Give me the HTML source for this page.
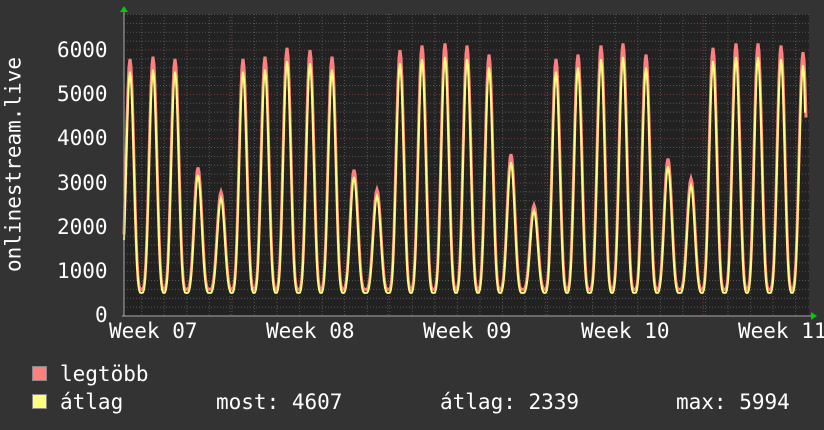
<!DOCTYPE html>
<html><head><meta charset="utf-8"><style>
html,body{margin:0;padding:0;background:#333;}
body{width:824px;height:430px;overflow:hidden;position:relative;font-family:"DejaVu Sans Mono","Liberation Mono",monospace;color:#fff;}
.t{position:absolute;font-size:21px;line-height:1;white-space:pre;}
.sq{position:absolute;width:13px;height:13px;border:1px solid #888;}
</style></head><body>
<svg id="g" width="824" height="430" style="position:absolute;left:0;top:0"></svg>
<div class="t" style="left:57px;top:40px">6000</div>
<div class="t" style="left:57px;top:84px">5000</div>
<div class="t" style="left:57px;top:128px">4000</div>
<div class="t" style="left:57px;top:173px">3000</div>
<div class="t" style="left:57px;top:217px">2000</div>
<div class="t" style="left:57px;top:261px">1000</div>
<div class="t" style="left:95px;top:305px">0</div>
<div class="t" style="left:-96px;top:154px;transform:rotate(-90deg);width:220px;text-align:center">onlinestream.live</div>
<div class="t" style="left:109px;top:321px">Week 07</div>
<div class="t" style="left:266px;top:321px">Week 08</div>
<div class="t" style="left:423px;top:321px">Week 09</div>
<div class="t" style="left:581px;top:321px">Week 10</div>
<div class="t" style="left:738px;top:321px">Week 11</div>
<div class="sq" style="left:32px;top:366px;background:#ff7f7f"></div>
<div class="sq" style="left:32px;top:394px;background:#ffff7f"></div>
<div class="t" style="left:60px;top:364px">legtöbb</div>
<div class="t" style="left:60px;top:392px">átlag</div>
<div class="t" style="left:216px;top:392px">most: 4607</div>
<div class="t" style="left:440px;top:392px">átlag: 2339</div>
<div class="t" style="left:676px;top:392px">max: 5994</div>
<script>
var s='<rect x="124" y="14" width="685" height="302" fill="#222"/>';
function Y(v){return 316-v*0.04433;}
for(var v=200;v<6900;v+=200){var y=Y(v);if(y<14)break;var maj=v%1000==0;
s+='<line x1="124" x2="809" y1="'+y+'" y2="'+y+'" stroke="'+(maj?'#7a3a3a':'#555')+'" stroke-dasharray="1,2"/>';}
for(var x=141.7;x<809;x+=22.55){s+='<line y1="14" y2="316" x1="'+x+'" x2="'+x+'" stroke="#555" stroke-dasharray="1,2"/>';}
[229.9,387.6,545.3,703].forEach(function(x){s+='<line y1="14" y2="316" x1="'+x+'" x2="'+x+'" stroke="#7a3a3a" stroke-dasharray="1,2"/>';});
var pk=[[130,5800],[153,5850],[175,5800],[198,3350],[221,2800],[243,5800],[265,5850],[287,6050],[310,6000],[332,5850],[354,3300],[377,2850],[400,6000],[422,6100],[445,6150],[467,6100],[489,5900],[511,3650],[534,2500],[556,5800],[578,5900],[601,6100],[623,6150],[646,5900],[668,3550],[691,3100],[713,6050],[736,6150],[758,6150],[781,6100],[803,5950]];
function val(x,avg){var best=null;for(var i=0;i<pk.length;i++){var d=x-pk[i][0];if(Math.abs(d)<=11.3){var ph=d/11.3*Math.PI;var f=Math.pow((1+Math.cos(ph))/2,1.8);var p=pk[i][1]*(avg?0.95:1);var mn=avg?520:600;var y=mn+(p-mn)*f;if(best===null||y>best)best=y;}}return best===null?560:best;}
function path(avg){var d='';for(var x=124;x<=806;x+=1){var v=val(x,avg);if(avg&&x>=805)v=4607;d+=(x==124?'M':'L')+x+','+Y(v).toFixed(1);}return d;}
s+='<path d="'+path(false)+'" fill="none" stroke="#ff7f7f" stroke-width="3"/>';
s+='<path d="'+path(true)+'" fill="none" stroke="#ffff7f" stroke-width="2"/>';
s+='<path d="M124,316 L124,12" stroke="#aaa"/><path d="M122,316 L812,316" stroke="#aaa"/>';
s+='<polygon points="120,12 128,12 124,6" fill="#0c0"/><polygon points="811,312 811,320 817,316" fill="#0c0"/>';
document.getElementById('g').innerHTML=s;
</script>
</body></html>
